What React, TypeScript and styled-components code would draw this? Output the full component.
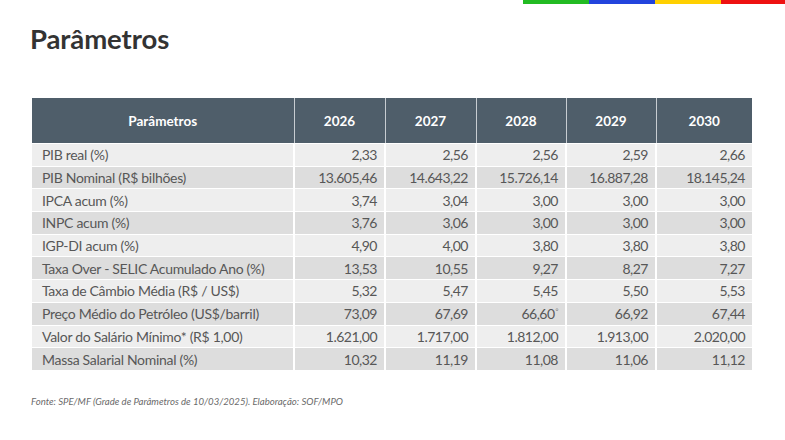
import styled, { createGlobalStyle } from "styled-components";

const GlobalStyle = createGlobalStyle`
	html, body {
		margin: 0;
		padding: 0;
		background: #ffffff;
	}
	body {
		width: 785px;
		height: 440px;
		overflow: hidden;
		font-family: Lato, "Open Sans", "Liberation Sans", sans-serif;
	}
`;

const Slide = styled.main`
	display: flex;
	flex-direction: column;
	width: 785px;
	height: 440px;
`;

const Strip = styled.div`
	display: flex;
	justify-content: flex-end;
	height: 4px;
`;

const StripPiece = styled.i<{ color: string; w: number }>`
	display: block;
	width: ${({ w }) => w}px;
	height: 100%;
	background: ${({ color }) => color};
`;

const Title = styled.h1`
	margin: 19px 0 0 30px;
	font-size: 27.5px;
	line-height: 32px;
	font-weight: 700;
	color: #333333;
	letter-spacing: -0.1px;
`;

const Table = styled.table`
	margin: 43px 0 0 32px;
	width: 720px;
	border-collapse: collapse;
	table-layout: fixed;
	font-size: 14px;
	letter-spacing: -0.3px;
`;

const HeadCell = styled.th`
	height: 45px;
	padding: 0;
	background: #4f5e6a;
	color: #ffffff;
	font-size: 13.5px;
	font-weight: 700;
	text-align: center;
	border-left: 1px solid #c7ccd1;
	letter-spacing: 0;

	&:first-child {
		border-left: none;
	}
`;

const Row = styled.tr<{ dark: boolean }>`
	height: 22.7px;
	background: ${({ dark }) => (dark ? "#dddddd" : "#eeeeee")};
`;

const LabelCell = styled.td`
	padding: 0 0 0 10px;
	color: #575757;
	white-space: nowrap;
	border-top: 1px solid #ffffff;
`;

const NumCell = styled.td`
	padding: 0 7px 0 0;
	color: #575757;
	text-align: right;
	white-space: nowrap;
	letter-spacing: -0.5px;
	border-top: 1px solid #ffffff;
	border-left: 2px solid #ffffff;
`;

const Mark = styled.sup`
	font-size: 7px;
	line-height: 0;
	vertical-align: 5px;
	margin-left: 1px;
	color: #777777;
`;

const Source = styled.p`
	margin: 26px 0 0 31px;
	font-size: 9.6px;
	font-style: italic;
	color: #6a6a6a;
	letter-spacing: 0;
`;

const years = ["2026", "2027", "2028", "2029", "2030"];
const widths = [262, 91, 91, 90, 90, 96];

const rows: [string, string[]][] = [
	["PIB real (%)", ["2,33", "2,56", "2,56", "2,59", "2,66"]],
	["PIB Nominal (R$ bilhões)", ["13.605,46", "14.643,22", "15.726,14", "16.887,28", "18.145,24"]],
	["IPCA acum (%)", ["3,74", "3,04", "3,00", "3,00", "3,00"]],
	["INPC acum (%)", ["3,76", "3,06", "3,00", "3,00", "3,00"]],
	["IGP-DI acum (%)", ["4,90", "4,00", "3,80", "3,80", "3,80"]],
	["Taxa Over - SELIC Acumulado Ano (%)", ["13,53", "10,55", "9,27", "8,27", "7,27"]],
	["Taxa de Câmbio Média (R$ / US$)", ["5,32", "5,47", "5,45", "5,50", "5,53"]],
	["Preço Médio do Petróleo (US$/barril)", ["73,09", "67,69", "66,60", "66,92", "67,44"]],
	["Valor do Salário Mínimo* (R$ 1,00)", ["1.621,00", "1.717,00", "1.812,00", "1.913,00", "2.020,00"]],
	["Massa Salarial Nominal (%)", ["10,32", "11,19", "11,08", "11,06", "11,12"]],
];

const App = () => {
	return (
		<>
			<GlobalStyle />
			<Slide>
				<Strip>
					<StripPiece color="#22bb22" w={66} />
					<StripPiece color="#2244dd" w={66} />
					<StripPiece color="#ffd000" w={66} />
					<StripPiece color="#ee1111" w={64} />
				</Strip>
				<Title>Parâmetros</Title>
				<Table>
					<colgroup>
						{widths.map((w, i) => (
							<col key={i} style={{ width: w }} />
						))}
					</colgroup>
					<thead>
						<tr>
							<HeadCell>Parâmetros</HeadCell>
							{years.map((y) => (
								<HeadCell key={y}>{y}</HeadCell>
							))}
						</tr>
					</thead>
					<tbody>
						{rows.map(([label, values], i) => (
							<Row key={label} dark={i % 2 === 1}>
								<LabelCell>{label}</LabelCell>
								{values.map((v, j) => (
									<NumCell key={j}>
										{v}
										{i === 7 && j === 2 && <Mark>°</Mark>}
									</NumCell>
								))}
							</Row>
						))}
					</tbody>
				</Table>
				<Source>
					Fonte: SPE/MF (Grade de Parâmetros de 10/03/2025). Elaboração: SOF/MPO
				</Source>
			</Slide>
		</>
	);
};

export default App;
